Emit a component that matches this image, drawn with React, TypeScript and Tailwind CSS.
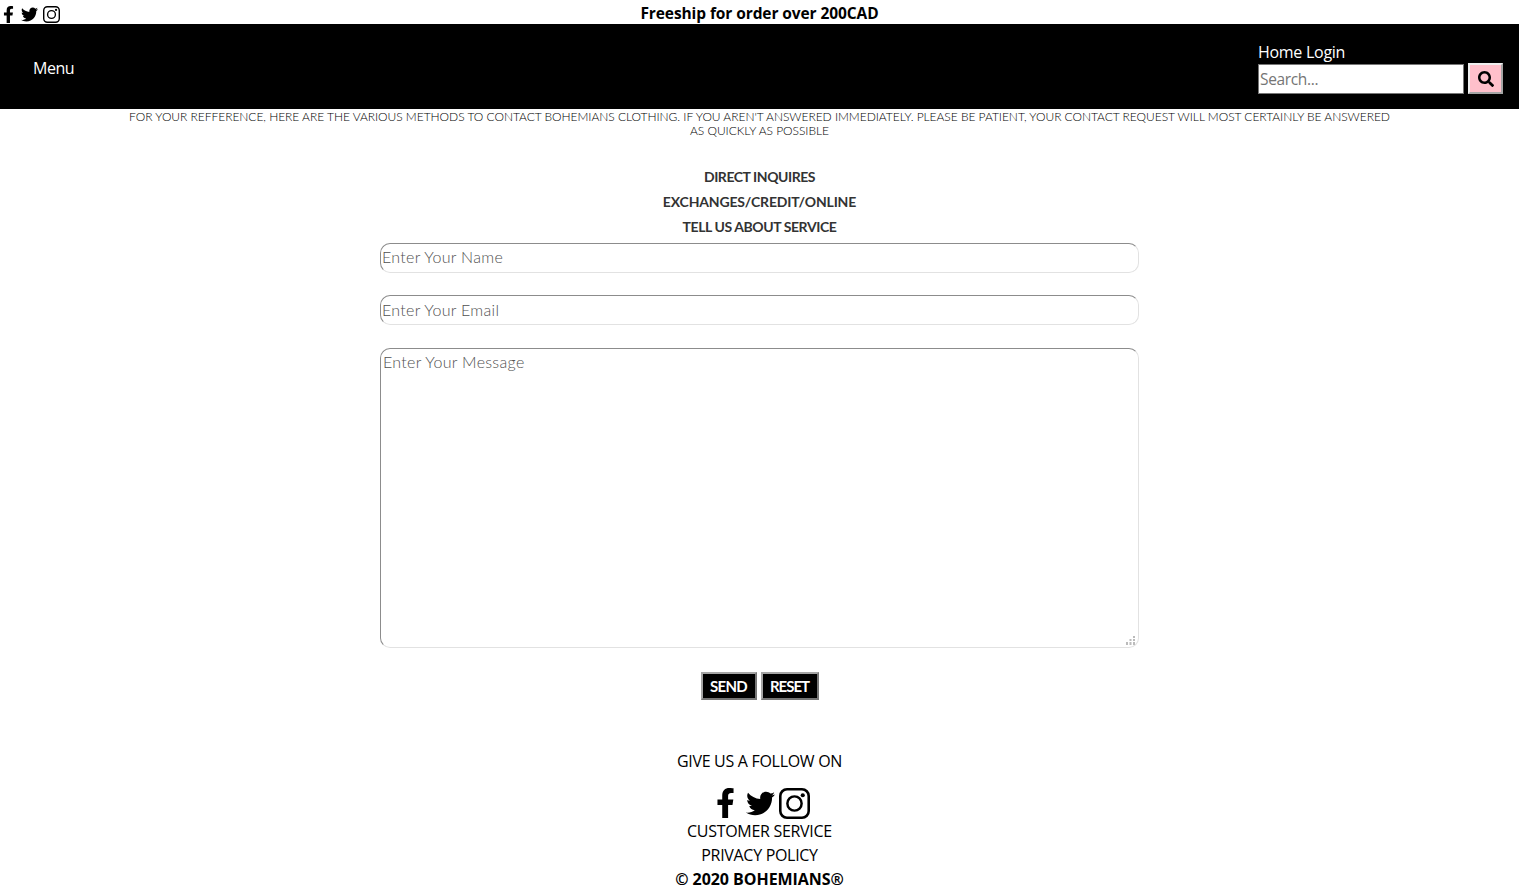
import type { ReactNode } from "react";
import { FaFacebookF, FaSearch, FaTwitter } from "react-icons/fa";

function InstagramIcon({ className }: { className: string }) {
  return (
    <svg viewBox="0 0 30 30" className={className} fill="none" stroke="#000">
      <rect x="1.25" y="1.25" width="27.5" height="27.5" rx="6.5" strokeWidth="2.5" />
      <circle cx="15" cy="15" r="6.9" strokeWidth="2.4" />
      <circle cx="23" cy="7" r="2" fill="#000" stroke="none" />
    </svg>
  );
}

function Heading({ children, className }: { children: ReactNode; className: string }) {
  return <h2 className={`h-[25px] text-[14px] leading-[25px] font-bold text-[#333] ${className}`}>{children}</h2>;
}

const field =
  "block w-[759px] rounded-[10px] border border-t-[#8c8c8c] border-l-[#8c8c8c] border-r-[#e2e2e2] border-b-[#e2e2e2] bg-white text-[16px] font-light tracking-[0.3px] outline-none placeholder:text-[#505050]";

export default function App() {
  return (
    <div className="flex h-[890px] w-[1519px] flex-col overflow-hidden bg-white font-['Open_Sans',sans-serif] text-[16px] tracking-[-0.3px] text-black">
      <div className="grid h-6 shrink-0 grid-cols-3">
        <div className="flex items-start pt-[6px] pl-[3px]">
          <FaFacebookF className="h-[17px] w-[11px]" />
          <FaTwitter className="ml-[7px] h-[17px] w-[17px]" />
          <InstagramIcon className="ml-[5px] h-[17px] w-[17px]" />
        </div>
        <p className="text-center text-[15.5px] leading-[27px] font-bold tracking-[-0.09px] whitespace-nowrap">Freeship for order over 200CAD</p>
      </div>

      <header className="flex h-[85px] shrink-0 items-start justify-between bg-black pr-4 pl-[33px] text-white">
        <a className="mt-[32px] leading-[25px] tracking-[-0.5px]">Menu</a>
        <div className="pt-[16px]">
          <nav className="flex h-[23px] gap-1 leading-[25px]">
            <a>Home</a>
            <a>Login</a>
          </nav>
          <div className="flex items-center gap-1">
            <input
              placeholder="Search..."
              className="h-[30px] w-[206px] border border-[#767676] bg-white pt-px pl-px text-[15.5px] tracking-[-0.35px] text-black outline-none placeholder:text-[#757575]"
            />
            <button className="flex h-[31px] w-[35px] items-center justify-center border-2 border-t-[#efefef] border-l-[#efefef] border-r-[#a5a5a5] border-b-[#a5a5a5] bg-[#ffc0cb] text-black">
              <FaSearch className="h-4 w-4" />
            </button>
          </div>
        </div>
      </header>

      <main className="flex h-[639px] shrink-0 flex-col items-center font-['Lato',sans-serif]">
        <p className="mt-px h-[54px] text-center text-[12px] leading-[14px] font-light tracking-[-0.033px] whitespace-nowrap text-black">
          FOR YOUR REFFERENCE, HERE ARE THE VARIOUS METHODS TO CONTACT BOHEMIANS CLOTHING. IF YOU AREN'T ANSWERED IMMEDIATELY. PLEASE BE PATIENT, YOUR CONTACT REQUEST WILL MOST CERTAINLY BE ANSWERED
          <br />
          AS QUICKLY AS POSSIBLE
        </p>
        <Heading className="tracking-[-0.45px]">DIRECT INQUIRES</Heading>
        <Heading className="tracking-[-0.17px]">EXCHANGES/CREDIT/ONLINE</Heading>
        <Heading className="tracking-[-0.42px]">TELL US ABOUT SERVICE</Heading>
        <form className="mt-[4px] flex flex-col items-center">
          <input placeholder="Enter Your Name" className={`${field} h-[30px] pb-[3px] pl-px`} />
          <input placeholder="Enter Your Email" className={`${field} mt-[22px] h-[30px] pb-[2px] pl-px`} />
          <div className="relative mt-[23px]">
            <textarea placeholder="Enter Your Message" className={`${field} h-[300px] resize-none py-[2px] pl-[2px] leading-[22px]`} />
            <svg viewBox="0 0 9 9" className="absolute right-[4px] bottom-[3px] h-[9px] w-[9px]" fill="#bbb">
              <path d="M7 0h2v2H7zM7 3h2v2H7zM7 6h2v3H7zM3.5 3h2v2h-2zM3.5 6h2v3h-2zM0 6h2v3H0z" />
            </svg>
          </div>
          <div className="mt-6 flex gap-1 text-[15px] font-bold text-white">
            <button type="button" className="h-[28px] w-[56px] border-2 border-t-[#a5a5a5] border-l-[#a5a5a5] border-r-[#767676] border-b-[#767676] bg-black leading-none tracking-[-0.7px]">
              SEND
            </button>
            <button type="reset" className="h-[28px] w-[58px] border-2 border-t-[#a5a5a5] border-l-[#a5a5a5] border-r-[#767676] border-b-[#767676] bg-black leading-none tracking-[-1px]">
              RESET
            </button>
          </div>
        </form>
      </main>

      <footer className="flex flex-col items-center leading-6">
        <p className="mt-px">GIVE US A FOLLOW ON</p>
        <div className="mt-[15px] flex h-[30px] w-[100px] items-center pl-[6px]">
          <FaFacebookF className="h-[30px] w-[19px]" />
          <FaTwitter className="ml-[11px] h-[29px] w-[29px]" />
          <InstagramIcon className="ml-[4px] h-[31px] w-[31px]" />
        </div>
        <p className="mt-px">CUSTOMER SERVICE</p>
        <p>PRIVACY POLICY</p>
        <p className="font-bold tracking-[-0.05px]">© 2020 BOHEMIANS®</p>
      </footer>
    </div>
  );
}
